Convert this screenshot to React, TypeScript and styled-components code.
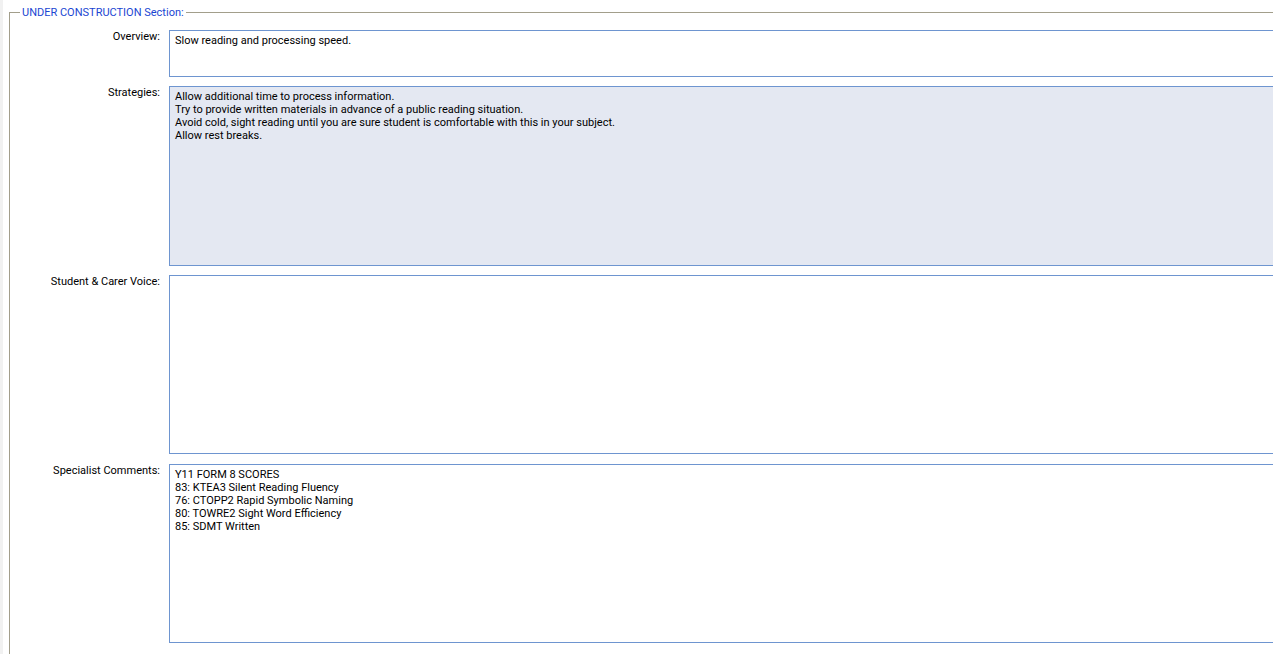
import React from "react";
import styled, { createGlobalStyle } from "styled-components";

const Global = createGlobalStyle`
  html, body { margin: 0; padding: 0; background: #ffffff; overflow: hidden; }
  body { font-family: Roboto, "Liberation Sans", Arial, sans-serif; font-size: 11px; color: #000000; }
`;

const Page = styled.div`
  display: flex;
  min-height: 654px;
`;

const EdgeStrip = styled.div`
  flex: 0 0 3px;
  background: #f1f1f1;
`;

const Fieldset = styled.fieldset`
  margin: 6px 0 0 6px;
  padding: 11px 0 30px 0;
  border: 1px solid #a29e8b;
  min-width: 0;
  flex: 0 0 1400px;
`;

const Legend = styled.legend`
  margin-left: 10px;
  padding: 0 2px;
  color: #1b46d2;
  font-size: 11px;
  line-height: 13px;
`;

const Rows = styled.div`
  display: flex;
  flex-direction: column;
  gap: 9px;
`;

const Row = styled.div<{ $extraTop?: number }>`
  display: grid;
  grid-template-columns: 150px 1fr;
  column-gap: 9px;
  align-items: start;
  margin-top: ${(p) => p.$extraTop ?? 0}px;
`;

const Label = styled.label`
  text-align: right;
  line-height: 13px;
  padding-top: 0px;
  color: #000000;
`;

const Area = styled.textarea<{ $h: number; $shaded?: boolean }>`
  display: block;
  box-sizing: border-box;
  width: 1200px;
  height: ${(p) => p.$h}px;
  margin: 0;
  padding: 3px 5px;
  border: 1px solid #6e95d0;
  border-radius: 0;
  background: ${(p) => (p.$shaded ? "#e4e8f2" : "#ffffff")};
  font-family: Roboto, "Liberation Sans", Arial, sans-serif;
  font-size: 11px;
  line-height: 13px;
  color: #000000;
  resize: none;
  overflow: hidden;
  outline: none;
`;

const fields = [
  { label: "Overview:", h: 47, text: "Slow reading and processing speed." },
  {
    label: "Strategies:",
    h: 180,
    shaded: true,
    text:
      "Allow additional time to process information.\nTry to provide written materials in advance of a public reading situation.\nAvoid cold, sight reading until you are sure student is comfortable with this in your subject.\nAllow rest breaks.",
  },
  { label: "Student & Carer Voice:", h: 179, text: "" },
  {
    label: "Specialist Comments:",
    h: 179,
    extraTop: 1,
    text:
      "Y11 FORM 8 SCORES\n83: KTEA3 Silent Reading Fluency\n76: CTOPP2 Rapid Symbolic Naming\n80: TOWRE2 Sight Word Efficiency\n85: SDMT Written",
  },
];

export default function App() {
  return (
    <>
      <Global />
      <Page>
        <EdgeStrip />
        <Fieldset>
          <Legend>UNDER CONSTRUCTION Section:</Legend>
          <Rows>
            {fields.map((f) => (
              <Row key={f.label} $extraTop={f.extraTop}>
                <Label>{f.label}</Label>
                <Area $h={f.h} $shaded={f.shaded} readOnly defaultValue={f.text} />
              </Row>
            ))}
          </Rows>
        </Fieldset>
      </Page>
    </>
  );
}
